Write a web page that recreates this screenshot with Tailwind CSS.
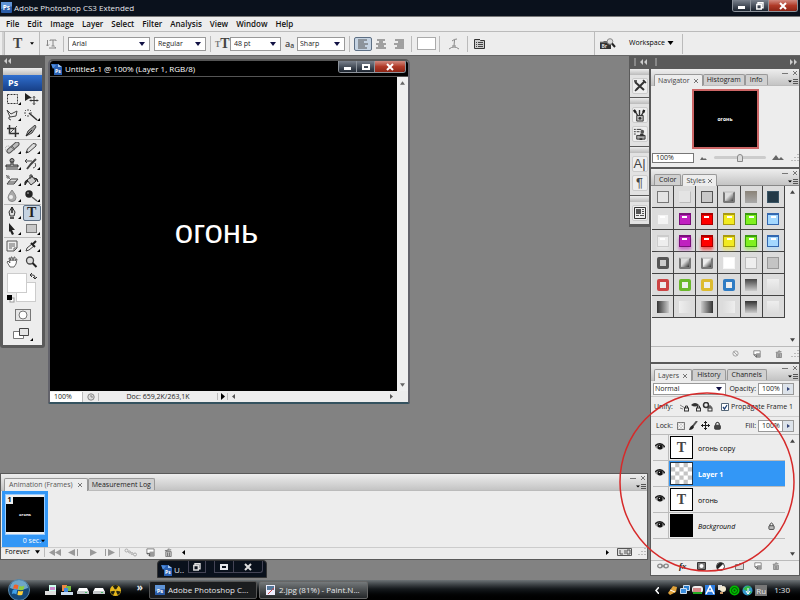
<!DOCTYPE html>
<html lang="en">
<head>
  <meta charset="UTF-8" />
  <meta name="viewport" content="width=device-width, initial-scale=1.0"/>
  <title>Adobe Photoshop CS3 Extended</title>
  <script src="https://cdn.jsdelivr.net/npm/@tailwindcss/browser@4"></script>
</head>
<body class="h-screen flex flex-col overflow-hidden bg-[#828282] font-['Open_Sans',sans-serif] text-[7px] leading-[10px] text-[#222]">

  <!-- shared icons -->
  <svg class="hidden">
    <symbol id="ps" viewBox="0 0 12 12"><rect width="12" height="12" rx="1" fill="#2a5ca8"/><path d="M0 0h12v5Q6 4 0 8z" fill="#5f93d6"/><text x="2" y="9" font-size="7" font-weight="700" fill="#fff">Ps</text></symbol>
    <symbol id="psdoc" viewBox="0 0 12 12"><path d="M1 1h6l4 3v8H3V5L1 4z" fill="#2b62b4"/><path d="M7 1v3h4z" fill="#a9cbf2"/><path d="M0 1l5 1-3 4z" fill="#4d8bdc"/><text x="4" y="10" font-size="5" font-weight="700" fill="#fff">Ps</text></symbol>
    <symbol id="down" viewBox="0 0 6 4"><path d="M0 0h6L3 4z"/></symbol>
    <symbol id="x" viewBox="0 0 6 6"><path d="M1 1l4 4M5 1L1 5" stroke="#777" fill="none"/></symbol>
    <symbol id="menu" viewBox="0 0 10 6"><path d="M0 1.500h4l-2 2z"/><path d="M5 .5h5M5 2.500h5M5 4.500h5" stroke="#555"/></symbol>
    <symbol id="new" viewBox="0 0 10 10"><path d="M1 1h8v8H4L1 6z" fill="#fff" stroke="#777"/><path d="M4 4v5h5V4z" fill="#999"/><path d="M1 6h3v3" fill="none" stroke="#444"/></symbol>
    <symbol id="trash" viewBox="0 0 10 10"><path d="M2 4h6v5.500H2z" fill="#ccc" stroke="#777"/><path d="M1 3l7-1M4 1.500l2-.5M4 5v4M6 5v4" stroke="#666" fill="none"/></symbol>
    <symbol id="grow" viewBox="0 0 8 8"><path d="M7 0v1M7 3v1M7 6v1M4 3v1M4 6v1M1 6v1" stroke="#bbb" stroke-width="2"/></symbol>
    <symbol id="eye" viewBox="0 0 10 8"><path d="M0 4Q5-2 10 4Q5 9 0 4z" fill="#999"/><path d="M0 3Q5-2 10 4" fill="none" stroke="#222" stroke-width="1.400"/><circle cx="5" cy="4" r="2.500" fill="#111"/><circle cx="4.400" cy="3.300" r=".6" fill="#fff"/></symbol>
    <symbol id="lock" viewBox="0 0 8 10"><path d="M2 5V3q2-3.500 4 0v2" fill="none" stroke="#333" stroke-width="1.200"/><rect x=".7" y="4.700" width="6.600" height="4.600" rx="1" fill="currentColor" stroke="#333"/></symbol>
    <symbol id="chk" viewBox="0 0 10 10"><path d="M0 0h10v10H0z" fill="#fff"/><path d="M2 0h2v2H2zM6 0h2v2H6zM0 2h2v2H0zM4 2h2v2H4zM8 2h2v2H8zM2 4h2v2H2zM6 4h2v2H6zM0 6h2v2H0zM4 6h2v2H4zM8 6h2v2H8zM2 8h2v2H2zM6 8h2v2H6z" fill="#c4c4c4"/></symbol>
    <symbol id="drive" viewBox="0 0 12 10"><path d="M2 3h8l2 4H0z" fill="#fff"/><path d="M0 6h12v3H0z" fill="#c4c8cb"/><path d="M8 7h2v1H8z" fill="#4b6"/></symbol>
  </svg>

  <!-- title bar -->
  <header class="h-[17px] shrink-0 flex items-start bg-[#0a111c] border-b border-[#777] pl-px">
    <svg class="size-[11px] mt-[2px]"><use href="#ps"/></svg>
    <h1 class="flex-1 pl-0.5 pt-[3px] text-[8px] leading-[10px] font-medium text-gray-200">Adobe Photoshop CS3 Extended</h1>
    <div class="flex h-3 mr-0.5 border border-t-0 border-[#8d939b] rounded-b-[3px] overflow-hidden">
      <button aria-label="Minimize" class="w-[18px] bg-linear-to-b from-[#7b828d] to-[#1d2530] flex justify-center items-center border-r border-[#8d939b]"><span class="w-[7px] h-[3px] mt-1 bg-white"></span></button>
      <button aria-label="Restore" class="w-[18px] bg-linear-to-b from-[#7b828d] to-[#1d2530] flex justify-center items-center border-r border-[#8d939b]"><svg class="size-2" viewBox="0 0 8 8"><path d="M2 2V.7h5v5H6M.8 2.500h4.500v4.500H.8z" fill="none" stroke="#fff" stroke-width="1.400"/></svg></button>
      <button aria-label="Close" class="w-[28px] bg-linear-to-b from-[#d28a80] via-[#b03a28] to-[#8c2414] flex justify-center items-center"><svg class="size-2" viewBox="0 0 8 8"><path d="M1 1l6 6M7 1L1 7" stroke="#fff" stroke-width="2"/></svg></button>
    </div>
  </header>

  <!-- menu bar -->
  <nav class="h-[15px] shrink-0 flex items-center gap-2 pl-[6px] pb-px bg-[#ededed] border-b border-[#bbb] text-[8px] font-semibold text-[#111]">
    <a href="#">File</a><a href="#">Edit</a><a href="#">Image</a><a href="#">Layer</a><a href="#">Select</a><a href="#">Filter</a><a href="#">Analysis</a><a href="#">View</a><a href="#">Window</a><a href="#">Help</a>
  </nav>

  <!-- type tool options -->
  <section class="h-[24px] shrink-0 flex items-center bg-[#ededed] border-b border-[#666]">
    <span class="w-[3px] h-full ml-0.5 bg-[#d2d2d2] border-r border-[#bbb]"></span>
    <button aria-label="Type tool" class="w-[35px] h-full flex items-center gap-2 pl-2 font-['Liberation_Serif',serif] text-[14px] leading-[14px] font-bold text-[#444] border-r border-[#bbb]">T<svg class="w-1 h-[3px]"><use href="#down"/></svg></button>
    <button aria-label="Text orientation" class="w-[24px] h-4 flex justify-center items-center border-r border-[#bbb]">
      <svg class="w-[11px] h-[10px]" viewBox="0 0 11 10" fill="none" stroke="#888"><path d="M4 2V1h6v1M7 1v6M5.500 7h3M1.500 1v6M0 5.500L1.500 7 3 5.500M3 9h7M8.500 8L10 9"/></svg>
    </button>
    <label class="ml-1 w-[82px] h-[14px] flex items-center bg-white border border-[#999] pr-1"><select aria-label="Font" class="appearance-none flex-1 min-w-0 pl-[3px]"><option>Arial</option></select><svg class="w-[6px] h-1 fill-[#114]"><use href="#down"/></svg></label>
    <label class="ml-1 w-[52px] h-[14px] flex items-center bg-white border border-[#999] pr-1"><select aria-label="Font style" class="appearance-none flex-1 min-w-0 pl-[3px]"><option>Regular</option></select><svg class="w-[6px] h-1 fill-[#114]"><use href="#down"/></svg></label>
    <span class="w-px h-4 mx-1 bg-[#bbb]"></span>
    <span class="w-[14px] flex items-end font-['Liberation_Serif',serif] font-bold text-[14px] leading-[13px] text-[#444]"><small class="text-[8px] leading-[10px] text-[#777]">T</small>T</span>
    <label class="ml-px w-[51px] h-[14px] flex items-center bg-white border border-[#999] pr-1"><select aria-label="Font size" class="appearance-none flex-1 min-w-0 pl-[3px]"><option>48 pt</option></select><svg class="w-[6px] h-1 fill-[#114]"><use href="#down"/></svg></label>
    <span class="w-[12px] ml-1 text-[9px] leading-[10px] font-semibold text-[#444]">a<sub>a</sub></span>
    <label class="w-[48px] h-[14px] flex items-center bg-white border border-[#999] pr-1"><select aria-label="Anti-aliasing" class="appearance-none flex-1 min-w-0 pl-0.5"><option>Sharp</option></select><svg class="w-[6px] h-1 fill-[#114]"><use href="#down"/></svg></label>
    <span class="w-px h-4 mx-1 bg-[#bbb]"></span>
    <div class="flex items-center gap-px">
      <button aria-label="Left align" class="w-[18px] h-[14px] flex justify-center items-center bg-[#c5d3e2] border border-[#5d6f84] rounded-xs"><svg class="w-[10px] h-[10px]" viewBox="0 0 10 10"><path d="M0 1h9M0 3h6M0 5h10M0 7h7M0 9h9" stroke="#555"/></svg></button>
      <button aria-label="Center" class="w-4 flex justify-center"><svg class="w-[10px] h-[10px]" viewBox="0 0 10 10"><path d="M1 1h8M3 3h4M0 5h10M2 7h6M0 9h10" stroke="#555"/></svg></button>
      <button aria-label="Right align" class="w-[17px] flex justify-center"><svg class="w-[10px] h-[10px]" viewBox="0 0 10 10"><path d="M1 1h9M4 3h6M0 5h10M3 7h7M1 9h9" stroke="#555"/></svg></button>
    </div>
    <span class="w-px h-4 ml-1 mr-[5px] bg-[#bbb]"></span>
    <button aria-label="Text color" class="w-[19px] h-[13px] bg-white border border-[#aaa]"></button>
    <span class="w-px h-4 mx-[3px] bg-[#bbb]"></span>
    <button aria-label="Warp text" class="w-[21px] flex justify-center"><svg class="w-[12px] h-[12px]" viewBox="0 0 12 12" fill="none" stroke="#888"><path d="M4 3q2-2 5-2M6.500 2L6 8M4 8h4M1 11q5-4 10 0"/></svg></button>
    <span class="w-px h-4 mx-[3px] bg-[#bbb]"></span>
    <button aria-label="Palettes" class="w-[16px] flex justify-center"><svg class="w-[11px] h-[11px]" viewBox="0 0 11 11"><path d="M.5 1.500h5l1 1h4v8H.5z" fill="#ccc" stroke="#333"/><path d="M1 1.500h5" stroke="#333"/><path d="M2 4.500h1M4 4.500h5M2 6.500h1M4 6.500h5M2 8.500h1M4 8.500h5" stroke="#444"/></svg></button>
    <div class="ml-auto flex items-center h-full w-[206px] border-l border-[#bbb]">
      <button aria-label="Go to Bridge" class="w-[29px] flex pl-[5px]"><svg class="w-[16px] h-[12px]" viewBox="0 0 16 12"><path d="M0 4h3l1-1h4v2h3v6H0z" fill="#333"/><path d="M0 4h11" stroke="#999"/><text x="1.500" y="9.500" font-size="5" font-weight="700" fill="#ddd">Br</text><circle cx="10" cy="3.500" r="2.800" fill="#ddd" stroke="#888"/><path d="M12 5.500l3 3.500" stroke="#222" stroke-width="2"/></svg></button>
      <button class="flex items-center gap-0.5 ml-[5px] pb-0.5 text-black">Workspace <svg class="w-[7px] h-1"><use href="#down"/></svg></button>
      <span class="w-px h-5 ml-2 bg-[#bbb]"></span>
    </div>
  </section>

  <main class="relative flex-1 min-h-0 flex">
    <div class="flex-1 min-w-0 flex flex-col">
      <div class="flex-1 min-h-0 flex justify-between items-start">

        <!-- tools -->
        <aside class="w-[45px] bg-[#5a5a5a] rounded-b-[3px] px-[3px] pb-[3px]">
          <div class="h-3 pt-0.5 pl-px"><svg class="w-[7px] h-[6px]" viewBox="0 0 7 6"><path d="M3 0v6L0 3zM7 0v6L4 3z" fill="#ccc"/></svg></div>
          <div class="bg-[#ededed] pb-1">
            <div class="h-[7px] bg-linear-to-b from-[#eee] to-[#bdbdbd]"></div>
            <div class="h-4 bg-linear-to-b from-[#2f6fd0] to-[#173f86] text-white text-[9px] leading-4 font-bold pl-[5px]">Ps</div>
            <div id="tools" class="grid grid-cols-2 px-px">
              <button aria-label="Marquee" class="h-4 grid place-items-center"><svg class="w-4 h-3" viewBox="0 0 16 12"><rect x="2.500" y="1.500" width="10" height="9" fill="none" stroke="#333" stroke-dasharray="2 1"/><path d="M16 9v3h-3z"/></svg></button>
              <button aria-label="Move" class="h-4 grid place-items-center"><svg class="w-4 h-3" viewBox="0 0 16 12"><path d="M1 0l7 5-3 .5L1 8z" fill="#222"/><path d="M10 3.500v8M6 7.500h8M9 4.500l1-1 1 1M9 10.500l1 1 1-1M7 6.500l-1 1 1 1M13 6.500l1 1-1 1" stroke="#333" fill="none"/></svg></button>
              <button aria-label="Lasso" class="h-4 grid place-items-center"><svg class="w-4 h-3" viewBox="0 0 16 12"><path d="M2 1l4 4 6-3-1 5-6 1zM5 8q-2 0-1 2l2 1" fill="none" stroke="#444"/><path d="M16 9v3h-3z"/></svg></button>
              <button aria-label="Magic wand" class="h-4 grid place-items-center"><svg class="w-4 h-3" viewBox="0 0 16 12"><path d="M5 4l8 7" stroke="#333" stroke-width="1.500"/><path d="M4 0v2M4 6v2M0 4h2M6 4h2M1 1l1 1M7 1L6 2M1 7l1-1" stroke="#555"/><path d="M16 9v3h-3z"/></svg></button>
              <button aria-label="Crop" class="h-4 grid place-items-center"><svg class="w-4 h-3" viewBox="0 0 16 12"><path d="M4.500 0v8.500H14M2 3.500h8.500V12" fill="none" stroke="#333" stroke-width="1.500"/><path d="M4 9l8-8" stroke="#555"/></svg></button>
              <button aria-label="Slice" class="h-4 grid place-items-center"><svg class="w-4 h-3" viewBox="0 0 16 12"><path d="M11 0l1 2-4 6-6 3 2-5z" fill="#999" stroke="#444"/><path d="M2 11l6-6" stroke="#222"/><path d="M16 9v3h-3z"/></svg></button>
              <hr class="col-span-2 border-[#bbb]">
              <button aria-label="Healing brush" class="h-4 grid place-items-center"><svg class="w-4 h-3" viewBox="0 0 16 12"><circle cx="3" cy="7" r="3" fill="none" stroke="#999" stroke-dasharray="1 1"/><path d="M4 9l8-7" stroke="#555" stroke-width="5" stroke-linecap="round"/><path d="M4 9l8-7" stroke="#bbb" stroke-width="3" stroke-linecap="round"/><path d="M6 5l4 3M7 4l3 3" stroke="#666"/><path d="M16 9v3h-3z"/></svg></button>
              <button aria-label="Pencil" class="h-4 grid place-items-center"><svg class="w-4 h-3" viewBox="0 0 16 12"><path d="M2 11l1.500-4L9 1.500 12 2v2L5 10z" fill="#ddd" stroke="#444"/><path d="M2 11l1-2 1 1z"/><path d="M16 9v3h-3z"/></svg></button>
              <button aria-label="Clone stamp" class="h-4 grid place-items-center"><svg class="w-4 h-3" viewBox="0 0 16 12"><circle cx="7" cy="2.500" r="2" fill="#999" stroke="#333"/><path d="M6 4h2v3h5v2H1V7h5z" fill="#aaa" stroke="#333"/><path d="M1 11h12" stroke="#333"/><path d="M16 9v3h-3z"/></svg></button>
              <button aria-label="History brush" class="h-4 grid place-items-center"><svg class="w-4 h-3" viewBox="0 0 16 12"><path d="M12 1L7 6l-4 5" stroke="#444" stroke-width="2" fill="none"/><path d="M1 3h7M3 1L1 3l2 2M9 10q4-1 2-5" stroke="#444" fill="none"/><path d="M16 9v3h-3z"/></svg></button>
              <button aria-label="Eraser" class="h-4 grid place-items-center"><svg class="w-4 h-3" viewBox="0 0 16 12"><path d="M2 10l4-5h7l-4 5z" fill="#ddd" stroke="#444"/><path d="M3 8h7l3-3" stroke="#555" fill="none"/><path d="M3 1v4M1 3h4M1 1l4 4" stroke="#777"/><path d="M16 9v3h-3z"/></svg></button>
              <button aria-label="Paint bucket" class="h-4 grid place-items-center"><svg class="w-4 h-3" viewBox="0 0 16 12"><path d="M3 6l5-4 4 5-5 4z" fill="#ccc" stroke="#333"/><path d="M6 5V1h2v3" fill="none" stroke="#333"/><path d="M3 6q-3 1-2 5Q2 9 4 7zM10 4q4 0 4 4" stroke="#222" fill="#333"/><path d="M16 9v3h-3z"/></svg></button>
              <button aria-label="Blur" class="h-4 grid place-items-center"><svg class="w-4 h-3" viewBox="0 0 16 12"><path d="M7 0q4 5 4 7.500a4 4 0 0 1-8 0Q3 5 7 0z" fill="#aaa" stroke="#888"/><circle cx="6" cy="7" r="2" fill="#eee"/><path d="M16 9v3h-3z"/></svg></button>
              <button aria-label="Dodge" class="h-4 grid place-items-center"><svg class="w-4 h-3" viewBox="0 0 16 12"><circle cx="5" cy="4" r="3.700" fill="#222"/><circle cx="4" cy="3" r="1" fill="#888"/><path d="M8 7l5 4" stroke="#555" stroke-width="1.500"/><path d="M16 9v3h-3z"/></svg></button>
              <hr class="col-span-2 border-[#bbb]">
              <button aria-label="Pen" class="h-4 grid place-items-center"><svg class="w-4 h-3" viewBox="0 0 16 12"><path d="M7 0l3 5-1 4H5L4 5z" fill="#ddd" stroke="#333"/><path d="M7 0v6M5 11h4" stroke="#222" stroke-width="1.500"/><path d="M16 9v3h-3z"/></svg></button>
              <button aria-label="Type" class="h-4 rounded-xs border border-[#5d6f84] bg-[#c5d3e2] font-['Liberation_Serif',serif] text-[14px] leading-[14px] font-bold text-[#222]">T</button>
              <button aria-label="Path selection" class="h-4 grid place-items-center"><svg class="w-4 h-3" viewBox="0 0 16 12"><path d="M4 0l6 7H7l2 4-2 1-2-4-1 1z" fill="#222"/><path d="M16 9v3h-3z"/></svg></button>
              <button aria-label="Rectangle" class="h-4 grid place-items-center"><svg class="w-4 h-3" viewBox="0 0 16 12"><rect x="2.500" y="1.500" width="10" height="8" fill="#c8c8c8" stroke="#777"/><path d="M16 9v3h-3z"/></svg></button>
              <hr class="col-span-2 border-[#bbb]">
              <button aria-label="Notes" class="h-4 grid place-items-center"><svg class="w-4 h-3" viewBox="0 0 16 12"><path d="M2 1h10v7l-3 3H2z" fill="#eee" stroke="#555"/><path d="M4 4h6M4 6h6M4 8h3M12 8H9v3" stroke="#666" fill="none"/><path d="M16 9v3h-3z"/></svg></button>
              <button aria-label="Eyedropper" class="h-4 grid place-items-center"><svg class="w-4 h-3" viewBox="0 0 16 12"><path d="M2 11l1-3 5-4 2 2-5 4z" fill="#eee" stroke="#444"/><path d="M7 3l4 4M9 4l3-3" stroke="#222" stroke-width="2"/><path d="M16 9v3h-3z"/></svg></button>
              <button aria-label="Hand" class="h-4 grid place-items-center"><svg class="w-4 h-3" viewBox="0 0 16 12"><path d="M5 11L2 6l1-1 2 2-1-5h1l1 3V1h1l1 4 1-4h1v4l1-2h1l-1 5-2 3z" fill="#fff" stroke="#444" stroke-width=".8"/></svg></button>
              <button aria-label="Zoom" class="h-4 grid place-items-center"><svg class="w-4 h-3" viewBox="0 0 16 12"><circle cx="6" cy="4.500" r="3.500" fill="#ddd" stroke="#444" stroke-width="1.300"/><path d="M8.500 7l4 4" stroke="#222" stroke-width="2"/></svg></button>
            </div>
            <button aria-label="Foreground and background colors" class="block ml-[2px] mt-px"><svg class="w-8 h-8" viewBox="0 0 32 32"><rect x="11.500" y="11.500" width="19" height="19" fill="#fff" stroke="#ccc"/><rect x="2.500" y="2.500" width="19" height="19" fill="#fff" stroke="#ccc"/><path d="M26 4h2q2 0 2 3M27 2l-2 2 2 2M28 6l2 2 2-2" fill="none" stroke="#333"/><rect x="5" y="27" width="4" height="4" fill="#fff" stroke="#999"/><path d="M2 24h5v5H2z"/></svg></button>
            <button aria-label="Quick mask" class="block mx-auto mt-[6px]"><svg class="w-4 h-3" viewBox="0 0 16 12"><rect x=".5" y=".5" width="15" height="11" fill="#e5e5e5" stroke="#777"/><circle cx="8" cy="6" r="4" fill="#fff" stroke="#777"/></svg></button>
            <button aria-label="Screen mode" class="block mx-auto mt-1.5"><svg class="w-5 h-[14px]" viewBox="0 0 20 14"><path d="M.5 4.500h10v7H.5z" fill="#fff" stroke="#777"/><path d="M6.500 1.500h9v7h-9z" fill="#e4e4e4" stroke="#444"/><path d="M20 11v3h-3z"/></svg></button>
          </div>
        </aside>

        <!-- collapsed dock icons -->
        <aside class="w-[21px] bg-[#5a5a5a] pl-px pr-px pb-[3px] flex flex-col gap-px">
          <div class="h-3 flex items-center gap-1 pl-1"><span class="w-0.5 h-[8px] border-x border-[#888]"></span><svg class="w-[7px] h-[6px]" viewBox="0 0 7 6"><path d="M3 0v6L0 3zM7 0v6L4 3z" fill="#ccc"/></svg></div>
          <div class="bg-[#e2e2e2] h-[28px] flex flex-col items-center gap-[3px]"><span class="w-full h-[6px] bg-linear-to-b from-[#eee] to-[#bbb]"></span>
            <button aria-label="Tool presets" class="size-[16px] grid place-items-center bg-[#eee] border border-[#ccc] rounded-xs"><svg class="size-[14px]" viewBox="0 0 14 14"><path d="M2 3l9 8M12 2L3 11" stroke="#333" stroke-width="2"/><path d="M1 2l3 0M10 1l3 3M2 12l2-2" stroke="#333" stroke-width="1.500"/></svg></button></div>
          <div class="bg-[#e2e2e2] h-[48px] flex flex-col items-center gap-[3px]"><span class="w-full h-[6px] bg-linear-to-b from-[#eee] to-[#bbb]"></span>
            <button aria-label="Brushes" class="size-[16px] grid place-items-center bg-[#eee] border border-[#ccc] rounded-xs"><svg class="size-[13px]" viewBox="0 0 14 14"><path d="M4 7h7v6H4z" fill="#bbb" stroke="#333"/><path d="M5 7L2 2M7 7V1M9 7l3-5" stroke="#333" stroke-width="1.500"/><path d="M1 1l2 3M12 1l-1 3" stroke="#222" stroke-width="2.500"/><circle cx="7.500" cy="10" r="1.500" fill="#333"/></svg></button>
            <button aria-label="Clone source" class="size-[16px] grid place-items-center bg-[#eee] border border-[#ccc] rounded-xs"><svg class="size-[13px]" viewBox="0 0 14 14"><path d="M1 1.500h2M4 1.500h5M1 4h2M4 4h3M1 6.500h2" stroke="#333"/><circle cx="10" cy="4" r="2" fill="#555"/><path d="M4 8h9v4H4z" fill="#aaa" stroke="#333"/><path d="M8 6h3l1 3H7zM7 11h3v2H7z" fill="#333"/></svg></button></div>
          <div class="bg-[#e2e2e2] h-[48px] flex flex-col items-center gap-[3px]"><span class="w-full h-[6px] bg-linear-to-b from-[#eee] to-[#bbb]"></span>
            <button aria-label="Character" class="size-[16px] bg-[#eee] border border-[#ccc] rounded-xs text-[13px] leading-[14px] font-['Liberation_Sans',sans-serif] text-[#444]">A|</button>
            <button aria-label="Paragraph" class="size-[16px] bg-[#eee] border border-[#ccc] rounded-xs text-[13px] leading-[14px] font-['Liberation_Sans',sans-serif] text-[#444]">¶</button></div>
          <div class="bg-[#e2e2e2] h-[28px] flex flex-col items-center gap-[3px]"><span class="w-full h-[6px] bg-linear-to-b from-[#eee] to-[#bbb]"></span>
            <button aria-label="Layer comps" class="size-[16px] grid place-items-center bg-[#eee] border border-[#ccc] rounded-xs"><svg class="size-[12px]" viewBox="0 0 12 12"><path d="M.5.5h11v11H.5z" fill="#eee" stroke="#333"/><path d="M2 2h5v5H2z" fill="#555"/><path d="M8 2.500h2M8 4.500h2M8 6.500h2M2 8.500h3M6 8.500h4" stroke="#555"/></svg></button></div>
        </aside>
      </div>

      <!-- animation panel -->
      <section class="h-[87px] mb-5 mr-0.5 flex flex-col bg-[#ededed] border border-[#5a5a5a]">
        <div class="h-[17px] shrink-0 flex items-end pl-[3px] bg-linear-to-b from-[#eee] to-[#c4c4c4] border-b border-[#bbb]">
          <button class="h-[13px] -mb-px px-1 flex items-center gap-1 bg-[#ededed] border border-b-0 border-[#999] rounded-t-xs text-[#555]">Animation (Frames) <svg class="size-[6px]"><use href="#x"/></svg></button>
          <button class="h-3 px-[3px] bg-[#d0d0d0] border border-b-0 border-[#999] rounded-t-xs">Measurement Log</button>
          <div class="ml-auto self-stretch flex flex-col items-end justify-between pt-px pr-px"><span class="flex gap-1 items-center"><i class="w-[6px] h-px bg-[#777]"></i><svg class="size-[6px]"><use href="#x"/></svg></span><svg class="w-[10px] h-[6px]"><use href="#menu"/></svg></div>
        </div>
        <div class="flex-1 pl-px">
          <figure class="w-[46px] h-[56px] p-[3px] pb-0 bg-[#3397f6]">
            <div class="h-[41px] py-0.5 border border-[#9cf] bg-[#eee]">
              <div class="h-full bg-black grid grid-cols-1 grid-rows-1 text-white">
                <span class="col-start-1 row-start-1 w-[7px] h-[7px] bg-[#eee] text-black font-bold text-center leading-[6px]">1</span>
                <span class="col-start-1 row-start-1 place-self-center text-[4px] leading-[5px] font-bold">огонь</span>
              </div>
            </div>
            <figcaption class="flex justify-end items-center text-white leading-[11px]">0 sec.<svg class="w-1 h-[4px]"><use href="#down"/></svg></figcaption>
          </figure>
        </div>
        <div class="h-[13px] flex items-center border-t border-[#ccc] pl-1 pb-1">
          <button class="w-[40px] flex items-center justify-between pr-1 text-black border-r border-[#bbb]">Forever <svg class="w-[5px] h-1"><use href="#down"/></svg></button>
          <svg class="w-[76px] h-[9px]" viewBox="0 0 76 9" fill="#999"><path d="M10 1v7L4 4.500zM16 1v7l-6-3.500zM30 1v7l-7-3.500zM32 1h1v7h-1zM45 1v7l7-3.500zM60 1h1v7h-1zM63 1v7l7-3.500z"/><path d="M74.500 0v9" stroke="#bbb"/></svg>
          <svg class="w-[14px] h-[9px] ml-[3px]" viewBox="0 0 14 9" fill="none" stroke="#aaa"><circle cx="2.500" cy="2.500" r="1.500"/><circle cx="5.500" cy="4" r="1"/><circle cx="8" cy="5.500" r="1"/><circle cx="11" cy="6.500" r="1.500"/></svg>
          <svg class="size-[9px] ml-2"><use href="#new"/></svg>
          <svg class="size-[9px] ml-[9px]"><use href="#trash"/></svg>
          <svg class="w-[3px] h-[5px] ml-[9px]" viewBox="0 0 3 5"><path d="M3 0v5L0 2.500z"/></svg>
          <svg class="w-[3px] h-[5px] ml-auto" viewBox="0 0 3 5"><path d="M0 0v5l3-2.500z"/></svg>
          <svg class="w-[15px] h-[8px] ml-2" viewBox="0 0 15 8"><path d="M.5.5h14v7H.5z" fill="#ddd" stroke="#555"/><path d="M3 2v4h3M8 2v4M10 2h3v4h-3z" stroke="#555" fill="none"/></svg>
          <svg class="size-[8px] ml-1.5 mr-px"><use href="#grow"/></svg>
        </div>
      </section>
    </div>

    <!-- panel dock -->
    <aside class="w-[150px] flex flex-col gap-0.5 bg-[#5a5a5a] px-px pb-px mb-[4px]">
      <div class="h-[11px] flex items-center justify-between pl-1 pr-0.5"><span class="w-0.5 h-[8px] border-x border-[#888]"></span><svg class="w-[7px] h-[6px]" viewBox="0 0 7 6"><path d="M0 0v6l3-3zM4 0v6l3-3z" fill="#ccc"/></svg></div>

      <section class="h-[98px] flex flex-col bg-[#ededed]">
        <div class="h-[17px] flex items-end pl-[3px] bg-linear-to-b from-[#eee] to-[#c4c4c4] border-b border-[#bbb]">
          <button class="h-[12px] -mb-px px-[3px] flex items-center gap-[3px] bg-[#ededed] border border-b-0 border-[#999] rounded-t-xs text-[#444]">Navigator <svg class="size-[6px]"><use href="#x"/></svg></button>
          <button class="h-[11px] px-[3px] bg-[#d0d0d0] border border-b-0 border-[#999] rounded-t-xs">Histogram</button>
          <button class="h-[11px] px-1 bg-[#d0d0d0] border border-b-0 border-[#999] rounded-t-xs">Info</button>
          <div class="ml-auto self-stretch flex flex-col items-end justify-between pt-px pr-px"><span class="flex gap-1 items-center"><i class="w-[6px] h-px bg-[#777]"></i><svg class="size-[6px]"><use href="#x"/></svg></span><svg class="w-[10px] h-[6px]"><use href="#menu"/></svg></div>
        </div>
        <div class="flex-1 grid place-items-center">
          <div class="w-[67px] h-[60px] bg-black border-2 border-[#c66] grid place-items-center text-white text-[5px] leading-[8px] font-bold">огонь</div>
        </div>
        <div class="h-[15px] pb-1 flex items-center pl-px">
          <input aria-label="Zoom" value="100%" class="w-[42px] h-[10px] bg-white border border-[#777] pl-[3px]">
          <svg class="w-[7px] h-1 ml-[6px]" viewBox="0 0 7 4"><path d="M0 4l2-3 2 2 1-1 2 2z" fill="#666"/></svg>
          <input aria-label="Zoom slider" type="range" class="appearance-none w-[52px] h-[3px] ml-[7px] bg-[#ccc] rounded-full [&::-webkit-slider-thumb]:appearance-none [&::-webkit-slider-thumb]:w-[6px] [&::-webkit-slider-thumb]:h-[8px] [&::-webkit-slider-thumb]:bg-[#ddd] [&::-webkit-slider-thumb]:border [&::-webkit-slider-thumb]:border-[#888] [&::-webkit-slider-thumb]:rounded-t-full">
          <svg class="w-[12px] h-[5px] ml-[6px]" viewBox="0 0 12 5"><path d="M0 5l4-5 3 4 2-2 3 3z" fill="#666"/></svg>
          <svg class="size-[8px] ml-auto"><use href="#grow"/></svg>
        </div>
      </section>

      <section class="h-[193px] flex flex-col bg-[#ededed]">
        <div class="h-[17px] flex items-end pl-[3px] bg-linear-to-b from-[#eee] to-[#c4c4c4] border-b border-[#888]">
          <button class="h-[11px] px-1 bg-[#d0d0d0] border border-b-0 border-[#999] rounded-t-xs">Color</button>
          <button class="h-[12px] -mb-px ml-px px-[3px] flex items-center gap-0.5 bg-[#ededed] border border-b-0 border-[#999] rounded-t-xs text-[#444]">Styles <svg class="size-[6px]"><use href="#x"/></svg></button>
          <div class="ml-auto self-stretch flex flex-col items-end justify-between pt-px pr-px"><span class="flex gap-1 items-center"><i class="w-[6px] h-px bg-[#777]"></i><svg class="size-[6px]"><use href="#x"/></svg></span><svg class="w-[10px] h-[6px]"><use href="#menu"/></svg></div>
        </div>
        <div class="flex-1 flex justify-between border-b border-[#bbb]">
          <div id="styles" class="grid grid-cols-6 content-start ml-px w-[133px]"></div>
          <div class="w-[14px] flex flex-col justify-between items-center py-1 fill-[#444]"><svg class="w-[5px] h-1 rotate-180"><use href="#down"/></svg><svg class="w-[5px] h-1"><use href="#down"/></svg></div>
        </div>
        <div class="h-[15px] pb-0.5 flex items-center justify-end gap-[14px]">
          <svg class="size-[7px]" viewBox="0 0 8 8"><circle cx="4" cy="4" r="3" fill="none" stroke="#999"/><path d="M2 2l4 4" stroke="#999"/></svg>
          <svg class="size-[8px]"><use href="#new"/></svg>
          <span class="flex gap-[8px]"><svg class="size-[8px]"><use href="#trash"/></svg><svg class="size-[8px]"><use href="#grow"/></svg></span>
        </div>
      </section>

      <section class="flex-1 flex flex-col bg-[#ededed]">
        <div class="h-[17px] flex items-end pl-[3px] bg-linear-to-b from-[#eee] to-[#c4c4c4] border-b border-[#bbb]">
          <button class="h-[12px] -mb-px px-[3px] flex items-center gap-[3px] bg-[#ededed] border border-b-0 border-[#999] rounded-t-xs text-[#444]">Layers <svg class="size-[6px]"><use href="#x"/></svg></button>
          <button class="h-[11px] px-1 bg-[#d0d0d0] border border-b-0 border-[#999] rounded-t-xs">History</button>
          <button class="h-[11px] ml-px px-1 bg-[#d0d0d0] border border-b-0 border-[#999] rounded-t-xs">Channels</button>
          <div class="ml-auto self-stretch flex flex-col items-end justify-between pt-px pr-px"><span class="flex gap-1 items-center"><i class="w-[6px] h-px bg-[#777]"></i><svg class="size-[6px]"><use href="#x"/></svg></span><svg class="w-[10px] h-[6px]"><use href="#menu"/></svg></div>
        </div>
        <div class="h-[16px] flex items-center pl-0.5 pr-[5px] border-b border-[#ccc]">
          <label class="w-[73px] h-[12px] flex items-center bg-white border border-[#999] pr-[3px]"><select aria-label="Blend mode" class="appearance-none flex-1 min-w-0 pl-px"><option>Normal</option></select><svg class="w-[6px] h-1 fill-[#114]"><use href="#down"/></svg></label>
          <label for="opacity" class="ml-auto pr-0.5">Opacity:</label>
          <input id="opacity" value="100%" class="w-[25px] h-[12px] bg-white border border-[#999] pl-[3px]">
          <button aria-label="Opacity slider" class="w-[11px] h-[12px] grid place-items-center bg-[#dde3ea] border border-l-0 border-[#999]"><svg class="w-[3px] h-1" viewBox="0 0 3 4"><path d="M0 0v4l3-2z" fill="#347"/></svg></button>
        </div>
        <div class="h-[20px] flex items-center pl-[3px] pr-[6px] border-b border-[#ccc]">
          <span>Unify:</span>
          <svg class="w-[34px] h-[10px] ml-1.5" viewBox="0 0 34 10"><path d="M1 3l5 3M1 6l3 1" stroke="#888"/><path d="M12 3q4-4 8 0-4 3-8 0z" fill="#333"/><circle cx="27" cy="3" r="2.500" fill="none" stroke="#333" stroke-width="1.500"/><g fill="#eee" stroke="#333"><rect x="5.500" y="6" width="4" height="3"/><rect x="17.500" y="6" width="4" height="3"/><rect x="29" y="6" width="4" height="3"/><path d="M6.500 6V4h2v2M18.500 6V4h2v2M30 6V4h2v2" fill="none"/></g></svg>
          <input id="propagate" type="checkbox" checked class="peer sr-only">
          <label for="propagate" class="ml-auto flex items-center gap-[2px]"><svg class="size-[8px]" viewBox="0 0 8 8"><path d="M.5.5h7v7h-7z" fill="#fff" stroke="#567"/><path d="M2 4l1.500 2L6 2" fill="none" stroke="#247" stroke-width="1.300"/></svg>Propagate Frame 1</label>
        </div>
        <div class="h-[17px] flex items-center pl-[5px] pr-[5px]">
          <span>Lock:</span>
          <svg class="size-[8px] ml-1" viewBox="0 0 10 10"><use href="#chk"/><path d="M.5.5h9v9h-9z" fill="none" stroke="#555"/></svg>
          <svg class="w-[9px] h-[9px] ml-1" viewBox="0 0 9 9"><path d="M8 0L4 5" stroke="#555" stroke-width="2"/><path d="M4 4Q1 5 0 9q4 0 5-3z" fill="#222"/></svg>
          <svg class="w-[9px] h-[9px] ml-[3px]" viewBox="0 0 9 9"><path d="M4.500 0v9M0 4.500h9M3 2l1.500-1.500L6 2M3 7l1.500 1.500L6 7M2 3L.5 4.500 2 6M7 3l1.500 1.500L7 6" stroke="#222" fill="none"/></svg>
          <svg class="w-[7px] h-[9px] ml-1 text-[#444]"><use href="#lock"/></svg>
          <label for="fill" class="ml-auto pr-0.5">Fill:</label>
          <input id="fill" value="100%" class="w-[25px] h-[12px] bg-white border border-[#999] pl-[3px]">
          <button aria-label="Fill slider" class="w-[11px] h-[12px] grid place-items-center bg-[#dde3ea] border border-l-0 border-[#999]"><svg class="w-[3px] h-1" viewBox="0 0 3 4"><path d="M0 0v4l3-2z" fill="#347"/></svg></button>
        </div>
        <div class="flex-1 flex border-y border-[#bbb]">
          <ul class="flex-1 ml-0.5 text-black">
            <li class="h-[26px] flex items-center border-b border-[#bbb]"><span class="w-[16px] h-full pt-2 pl-0.5 border-r border-[#bbb]"><svg class="w-[10px] h-[8px]"><use href="#eye"/></svg></span><span class="size-[23px] ml-px grid place-items-center bg-white border border-black font-['Liberation_Serif',serif] text-[14px] font-bold text-[#444]">T</span><span class="pl-[5px] pt-[3px]">огонь copy</span></li>
            <li class="h-[26px] flex items-center border-b border-[#bbb]"><span class="w-[16px] h-full pt-2 pl-0.5 border-r border-[#bbb]"><svg class="w-[10px] h-[8px]"><use href="#eye"/></svg></span><span class="flex-1 h-full flex items-center bg-[#3397f6] text-white font-bold"><span class="size-[23px] ml-px border border-[#234]"><svg class="size-[21px]" viewBox="0 0 10 10"><use href="#chk"/></svg></span><span class="pl-[5px] pt-[3px]">Layer 1</span></span></li>
            <li class="h-[26px] flex items-center border-b border-[#bbb]"><span class="w-[16px] h-full pt-2 pl-0.5 border-r border-[#bbb]"><svg class="w-[10px] h-[8px]"><use href="#eye"/></svg></span><span class="size-[23px] ml-px grid place-items-center bg-white border border-black font-['Liberation_Serif',serif] text-[14px] font-bold text-[#444]">T</span><span class="pl-[5px] pt-[3px]">огонь</span></li>
            <li class="h-[26px] flex items-center border-b border-[#bbb]"><span class="w-[16px] h-full pt-2 pl-0.5 border-r border-[#bbb]"><svg class="w-[10px] h-[8px]"><use href="#eye"/></svg></span><span class="size-[23px] ml-px bg-black"></span><span class="pl-[5px] pt-[3px] italic">Background</span><svg class="w-[7px] h-[8px] ml-auto mr-[10px] text-[#bbb]"><use href="#lock"/></svg></li>
          </ul>
          <div class="w-[14px] flex flex-col justify-between items-center py-1 fill-[#444]"><svg class="w-[5px] h-1 rotate-180"><use href="#down"/></svg><svg class="w-[5px] h-1"><use href="#down"/></svg></div>
        </div>
        <div class="h-[14px] pb-1 flex items-center gap-[10px] pl-[6px]">
          <svg class="w-[12px] h-[6px]" viewBox="0 0 12 6" fill="none" stroke="#888" stroke-width="1.300"><ellipse cx="3" cy="3" rx="2.300" ry="1.800"/><ellipse cx="9" cy="3" rx="2.300" ry="1.800"/><path d="M4 3h4"/></svg>
          <span class="text-[9px] italic font-bold font-['Liberation_Serif',serif]">fx</span>
          <svg class="w-[9px] h-[8px]" viewBox="0 0 9 8"><path d="M.5.5h8v7h-8z" fill="#777" stroke="#333"/><circle cx="4.500" cy="4" r="2" fill="#fff"/></svg>
          <svg class="size-[9px]" viewBox="0 0 9 9"><circle cx="4.500" cy="4.500" r="4" fill="#fff" stroke="#333"/><path d="M1.700 7.300A4 4 0 0 1 7.300 1.700z" fill="#222"/></svg>
          <svg class="w-[9px] h-[7px]" viewBox="0 0 9 7"><path d="M.5 1.500h3l1-1h4v6h-8z" fill="#ddd" stroke="#777"/></svg>
          <svg class="size-[8px]"><use href="#new"/></svg>
          <svg class="size-[8px]"><use href="#trash"/></svg>
        </div>
      </section>
    </aside>

    <!-- document window -->
    <section class="absolute left-[48px] top-[3px] w-[362px] h-[345px] flex flex-col bg-[#ededed] border-2 border-t-[#555] border-x-[#63636b] border-b-[#34525f] rounded-t-[5px] rounded-b-xs overflow-hidden">
      <div class="h-4 shrink-0 flex items-start bg-black pl-px border-b border-[#555]">
        <svg class="size-[12px] mt-0.5"><use href="#psdoc"/></svg>
        <h2 class="flex-1 pl-0.5 pt-[3px] text-[8px] leading-[10px] font-medium text-white whitespace-nowrap">Untitled-1 @ 100% (Layer 1, RGB/8)</h2>
        <div class="flex h-3 mr-0.5 border border-t-0 border-[#8d939b] rounded-b-[3px] overflow-hidden">
          <button aria-label="Minimize" class="w-[18px] bg-linear-to-b from-[#7b828d] to-[#1d2530] flex justify-center items-center border-r border-[#8d939b]"><span class="w-[7px] h-[3px] mt-1 bg-white"></span></button>
          <button aria-label="Maximize" class="w-[18px] bg-linear-to-b from-[#7b828d] to-[#1d2530] flex justify-center items-center border-r border-[#8d939b]"><span class="w-[8px] h-[6px] border-2 border-white"></span></button>
          <button aria-label="Close" class="w-[30px] bg-linear-to-b from-[#d28a80] via-[#b03a28] to-[#8c2414] flex justify-center items-center"><svg class="size-2" viewBox="0 0 8 8"><path d="M1 1l6 6M7 1L1 7" stroke="#fff" stroke-width="2"/></svg></button>
        </div>
      </div>
      <div class="flex-1 flex">
        <div class="flex-1 bg-black grid place-items-center pr-[14px] pb-1"><span class="text-white font-['Liberation_Sans',sans-serif] text-[33px] leading-[36px]">огонь</span></div>
        <div class="w-[11px] flex flex-col justify-between items-center py-1 bg-[#f0f0f0] fill-[#666]"><svg class="w-[5px] h-1 rotate-180"><use href="#down"/></svg><svg class="w-[5px] h-1"><use href="#down"/></svg></div>
      </div>
      <div class="h-[11px] shrink-0 flex items-center bg-[#ededed]">
        <input aria-label="Document zoom" value="100%" class="w-[33px] h-[10px] bg-white pl-1 border-r border-[#bbb]">
        <span class="w-[16px] grid place-items-center border-r border-[#bbb]"><svg class="size-[8px]" viewBox="0 0 8 8"><circle cx="4" cy="4" r="3.200" fill="#ddd" stroke="#888"/><path d="M4 2v2h2" stroke="#888" fill="none"/></svg></span>
        <span class="w-[118px] text-center">Doc: 659,2K/263,1K</span>
        <span class="w-[11px] grid place-items-center border-x border-[#bbb]"><svg class="w-1 h-[7px]" viewBox="0 0 4 7"><path d="M0 0v7l4-3.500z"/></svg></span>
        <svg class="w-[3px] h-[5px] ml-[4px]" viewBox="0 0 3 5"><path d="M3 0v5L0 2.500z" fill="#555"/></svg>
        <svg class="w-[3px] h-[5px] ml-auto mr-[15px]" viewBox="0 0 3 5"><path d="M0 0v5l3-2.500z" fill="#555"/></svg>
      </div>
    </section>

    <!-- minimized document -->
    <section class="absolute left-[157px] bottom-[2px] w-[110px] h-[18px] flex items-start bg-[#0a111c] border border-[#333] rounded-t-[4px] pl-[3px] text-gray-200 text-[8px]">
      <svg class="size-[12px] mt-[3px]"><use href="#psdoc"/></svg>
      <span class="pl-px pt-1 w-[15px]">U..</span>
      <button aria-label="Restore" class="w-[18px] h-3 grid place-items-center border border-t-0 border-[#445]"><svg class="size-[8px]" viewBox="0 0 8 8"><path d="M2 2V.7h5v5H6M.8 2.500h4.500v4.500H.8z" fill="none" stroke="#ddd" stroke-width="1.400"/></svg></button>
      <button aria-label="Maximize" class="w-[20px] h-3 ml-[8px] grid place-items-center border border-t-0 border-[#445]"><span class="w-[8px] h-[6px] border-2 border-gray-200"></span></button>
      <button aria-label="Close" class="w-[29px] h-3 grid place-items-center border border-t-0 border-l-0 border-[#445] rounded-br-[3px]"><svg class="size-2" viewBox="0 0 8 8"><path d="M1 1l6 6M7 1L1 7" stroke="#ddd" stroke-width="2"/></svg></button>
    </section>

    <!-- marker ring around the layers panel -->
    <svg class="absolute right-[4px] bottom-[8px] w-[178px] h-[180px] pointer-events-none" viewBox="0 0 178 180"><ellipse cx="89" cy="90" rx="87" ry="89" fill="none" stroke="#d62a2a" stroke-width="1.500"/></svg>
  </main>

  <!-- taskbar -->
  <footer class="h-5 shrink-0 flex items-center bg-linear-to-b from-[#6d7376] via-[#15191c] via-45% to-black text-[8px] text-gray-200">
    <button aria-label="Start" class="ml-[8px] mr-[15px]"><svg class="size-[22px]" viewBox="0 0 22 22"><circle cx="11" cy="11" r="10.500" fill="#14497a" stroke="#5a88a8"/><path d="M2 9a9 8 0 0 1 18 0q-9 4-18 0z" fill="#6fa6c8"/><path d="M6 6q2-1 4.500.4l-1 4Q7 9 5 10z" fill="#f0622a"/><path d="M11.500 7q2.500 1 5-.5l-1 4q-2.500 1.300-5 0z" fill="#8ccf3c"/><path d="M4.700 11q2.300-1 4.600.3l-1 4.200Q6 14 3.800 15z" fill="#3f9fe8"/><path d="M10.300 11.700q2.500 1 5 0l-1 4q-2.500 1.300-5 0z" fill="#fdd03a"/></svg></button>
    <div class="w-[104px] flex gap-1 items-center">
      <svg class="w-[12px] h-[11px]" viewBox="0 0 12 11"><path d="M4 0h7v6H4z" fill="#cfe"/><path d="M5 2h5v3H5z" fill="#c8c"/><path d="M0 6h11v4H0z" fill="#ddd"/></svg>
      <svg class="w-[12px] h-[11px]" viewBox="0 0 12 11"><path d="M1 0h5v6H1z" fill="#e84"/><path d="M5 1h5v5H5z" fill="#7b4"/><path d="M3 3h4v4H3z" fill="#48d"/><path d="M0 7h12v3H0z" fill="#cde"/></svg>
      <svg class="w-[12px] h-[10px]"><use href="#drive"/></svg>
      <svg class="w-[12px] h-[10px]"><use href="#drive"/></svg>
      <svg class="size-[11px] ml-px" viewBox="0 0 12 12"><circle cx="6" cy="6" r="6" fill="#e8b81c"/><path d="M6 6L3 1a6 6 0 0 1 6 0zM6 6L.5 7a6 6 0 0 0 3 4zM6 6l5.500 1a6 6 0 0 1-3 4z" fill="#221"/><circle cx="6" cy="6" r="1.300" fill="#e8b81c"/></svg>
      <span class="ml-auto pb-1.5 pr-[6px] text-[10px] font-bold">»</span>
    </div>
    <button class="w-[108px] h-[18px] px-[5px] flex items-center gap-[3px] bg-[#1b1d1f] border border-[#555] rounded-xs font-medium whitespace-nowrap"><svg class="size-[10px] shrink-0"><use href="#ps"/></svg>Adobe Photoshop C...</button>
    <button class="w-[109px] h-[18px] ml-0.5 px-[6px] flex items-center gap-[4px] bg-linear-to-b from-[#75797b] to-[#25282a] border border-[#666] rounded-xs font-medium whitespace-nowrap"><svg class="w-[9px] h-[10px] shrink-0" viewBox="0 0 9 10"><path d="M0 0h9v10H0z" fill="#eef"/><path d="M1 1h7v4H1z" fill="#579"/><path d="M2 9l6-6" stroke="#c44"/></svg>2.jpg (81%) - Paint.N...</button>
    <div class="ml-auto flex items-center gap-[2px] pr-[10px]">
      <svg class="w-[4px] h-[7px] mr-[6px]" viewBox="0 0 4 7"><path d="M4 0L1 3.500 4 7" fill="none" stroke="#fff" stroke-width="1.500"/></svg>
      <svg class="size-[11px]" viewBox="0 0 11 11"><path d="M1 8l5-7 4 1-1 5-6 3z" fill="#e0a23a"/><path d="M3 5l5 2" stroke="#fff"/></svg>
      <svg class="size-[10px]" viewBox="0 0 10 10"><path d="M3.500.5h6v5h-6z" fill="#2a7fd0" stroke="#cde"/><path d="M.5 3.500h6v5h-6z" fill="#3b8fe0" stroke="#cde"/></svg>
      <svg class="w-[11px] h-[10px]" viewBox="0 0 11 10"><rect y="1" width="11" height="7" rx="3" fill="#eee"/><path d="M2 3v4M4 3v4M6 3v4M8 3v4" stroke="#b22"/><path d="M1 8h9" stroke="#2a2" stroke-width="2"/></svg>
      <svg class="size-[10px]" viewBox="0 0 10 10"><path d="M0 0h10v10H0z" fill="#2d7de0"/><path d="M1 9l4-8 4 8M3 6h4" stroke="#fff" stroke-width="1.500" fill="none"/></svg>
      <svg class="size-[10px]" viewBox="0 0 10 10"><path d="M1 0h4v5H1z" fill="#ddd"/><circle cx="6" cy="4" r="3" fill="#f2ead0"/><path d="M3 7h3v2H3z" fill="#c96"/></svg>
      <svg class="size-[11px]" viewBox="0 0 11 11"><circle cx="5.500" cy="5.500" r="5" fill="#0b0"/><circle cx="5.500" cy="5.500" r="3" fill="none" stroke="#050"/><circle cx="5.500" cy="5.500" r="1" fill="#050"/></svg>
      <svg class="size-[11px]" viewBox="0 0 11 11"><circle cx="5.500" cy="5.500" r="5" fill="#39c"/><path d="M1 4q4-5 8-2L5 6zM6 10l1-4 3 1z" fill="#3b4"/><path d="M6 3v6M4 6l2 3 2-3" stroke="#fff" fill="none"/></svg>
      <span class="px-px bg-[#777] leading-[11px]">Ru</span>
      <time class="pl-[5px]">1:30</time>
    </div>
  </footer>

  <script>
    // [kind, color or first stop, second stop]
    const styles = [
      ['frame', '#e4e4e4', '#777'], ['bevel', '#e4e4e4', '#bbb'], ['frame', '#c8c8c8', '#555'], ['metal', '#ddd', '#444'], ['fade', '#8a8378', '#aaa'], ['frame', '#243a48', '#3a5566'],
      ['gel', '#f4f4f4', '#ddd'], ['gel', '#c020c0', '#7a107a'], ['gel', '#f00', '#a00'], ['gel', '#f2ea20', '#aa9a10'], ['gel', '#80f020', '#3a9a10'], ['gel', '#a4d8ff', '#3468b0'],
      ['glow', '#eeeeee', '#ccc'], ['glow', '#c020c0', '#7a107a'], ['glow', '#ff0000', '#a00'], ['glow', '#f2ea20', '#aa9a10'], ['glow', '#80f020', '#3a9a10'], ['glow', '#a4d8ff', '#3468b0'],
      ['ring', '#ccc', '#555'], ['metal', '#ddd', '#333'], ['metal', '#eee', '#333'], ['frame', '#fff', '#f6f6f6'], ['frame', '#eee', '#bbb'], ['frame', '#c4c4c4', '#999'],
      ['ring', '#eee', '#cc4444'], ['ring', '#eee', '#6ab82c'], ['ring', '#eee', '#ddbb30'], ['ring', '#eee', '#2f7cc4'], ['fade', '#444', '#ccc'], ['fade', '#eee', '#ddd'],
      ['side', '#333', '#ccc'], ['side', '#eee', '#ddd'], ['side', '#ccc', '#333'], ['side', '#ddd', '#eee'], ['fade', '#333', '#ccc'], ['fade', '#eee', '#ddd']
    ];

    const looks = {
      frame: (a, b) => `background:${a};border:1px solid ${b}`,
      bevel: (a, b) => `background:${a};border:1px solid ${a};border-right-color:${b};border-bottom-color:${b}`,
      metal: (a, b) => `background:linear-gradient(135deg,${a} 40%,${b});border:2px solid #777;border-top-color:#ccc;border-radius:2px`,
      fade: (a, b) => `background:linear-gradient(${a},${b})`,
      side: (a, b) => `background:linear-gradient(90deg,${a},${b})`,
      gel: (a, b) => `background:linear-gradient(#fff,#fff) 50% 1px/5px 2px no-repeat,${a};border:1px solid ${b};border-top-width:2px`,
      glow: (a, b) => `background:linear-gradient(#fff,#fff) 50% 1px/5px 2px no-repeat,${a};border:1px solid ${b};border-top-width:2px;box-shadow:0 3px 3px ${a}99`,
      ring: (a, b) => `background:${a};border:3px solid ${b};border-radius:2px`
    };

    document.getElementById('styles').innerHTML = styles.map(([kind, a, b]) => `
      <button aria-label="Style" class="h-[22px] grid place-items-center bg-[#dcdcdc] border-r border-b border-[#444]">
        <span class="size-[12px]" style="${looks[kind](a, b)}"></span>
      </button>`).join('');
  </script>
</body>
</html>
